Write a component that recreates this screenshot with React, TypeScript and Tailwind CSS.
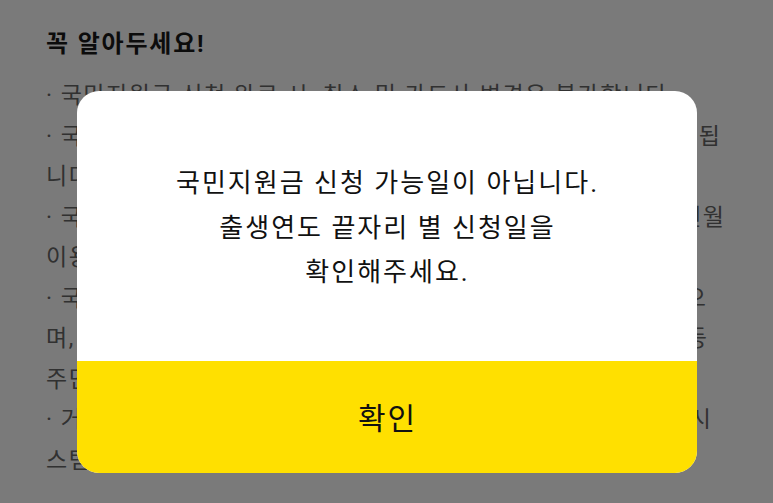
import React from "react";

const FONT = '"Roboto", "Noto Sans CJK KR", "Noto Sans", sans-serif';

type Line = { lead?: string; text: string; end?: number };

// Notice rows, laid out line by line; wrapped rows are justified to their right edge.
const lines: Line[] = [
  { lead: "· 국민지원금", text: " 신청 완료 시, 취소 및 카드사 변경은 불가합니다" },
  { lead: "· 국민지원금은", text: " 신청 다음 날 카드로 충전되며, 문자로 안내됩", end: 720 },
  { text: "니다." },
  { lead: "· 국민지원금은", text: " 충전일부터 사용 가능하며, 사용 내역은 전월", end: 724 },
  { text: "이용대금 명세서에서 확인하실 수 있습니다." },
  { lead: "· 국민지원금은", text: " 주소지 관할 지역 가맹점에서 사용할 수 있으", end: 706 },
  { text: "며, 대형마트, 백화점, 온라인 쇼핑몰, 유흥업소 등", end: 707 },
  { text: "주단위로 사용 한도가 적용될 수 있습니다." },
  { lead: "· 거주지", text: " 이전 시에도 기존 지역에서 사용 가능하며, 문의는 시", end: 711 },
  { text: "스템 점검 시간을 제외하고 가능합니다." },
];

export default function App() {
  return (
    <div className="relative h-[503px] w-[773px] overflow-hidden bg-white" style={{ fontFamily: FONT }}>
      {/* notice page */}
      <div className="pl-[46px] pt-[29px]">
        <h2 className="text-[24px] font-bold leading-[30px] tracking-[1.8px] text-[#1a1a1a]">꼭 알아두세요!</h2>
        <div className="mt-[17px] flex flex-col">
          {lines.map((l, i) => (
            <div
              key={i}
              className={
                l.end
                  ? "h-[40.5px] overflow-hidden whitespace-nowrap text-[23px] leading-[40.5px] tracking-[1.5px] text-[#666] [text-align-last:justify] [text-align:justify]"
                  : "h-[40.5px] overflow-hidden whitespace-nowrap text-[23px] leading-[40.5px] tracking-[1.5px] text-[#666]"
              }
              style={l.end ? { width: l.end - 46 + 1.5 } : undefined}
            >
              {l.lead && <span className="inline-block">{l.lead}</span>}
              {l.text}
            </div>
          ))}
        </div>
      </div>

      {/* dim overlay with dialog */}
      <div className="absolute inset-0 flex justify-center bg-black/[0.52] pt-[91px]">
        <div className="flex h-[382px] w-[620px] flex-col overflow-hidden rounded-[22px] bg-white">
          <div className="flex h-[270px] flex-col items-center justify-center pl-[2px] pt-[4px] text-center text-[26px] leading-[44.5px] tracking-[2px] text-[#111]">
            <p>국민지원금 신청 가능일이 아닙니다.</p>
            <p>출생연도 끝자리 별 신청일을</p>
            <p>확인해주세요.</p>
          </div>
          <button
            className="flex h-[112px] items-center justify-center bg-[#ffe000] pl-[2px] pt-[2px] text-[30px] tracking-[2px] text-[#111]"
            style={{ fontFamily: FONT }}
          >
            확인
          </button>
        </div>
      </div>
    </div>
  );
}
